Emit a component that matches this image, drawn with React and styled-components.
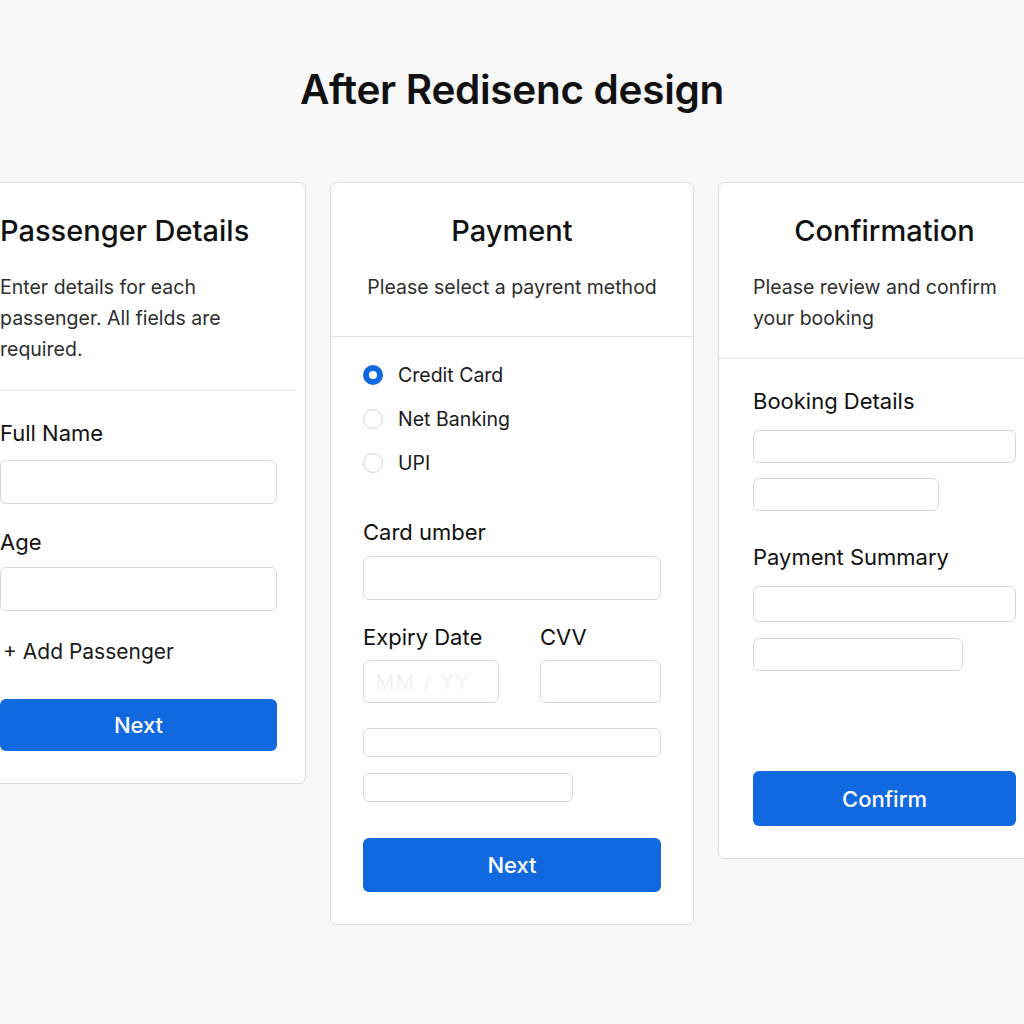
import styled, { createGlobalStyle } from 'styled-components';

const GlobalStyle = createGlobalStyle`
body {
    margin: 0;
    background: #f7f7f7;
    font-family: Inter, "Noto Sans", sans-serif;
    color: #111;
    overflow: hidden;
}
`;

const Page = styled.div`
width: 1024px;
height: 1024px;
padding-top: 66px;
box-sizing: border-box;
`;

const PageTitle = styled.h1`
margin: 0;
text-align: center;
font-size: 40.5px;
line-height: 48px;
font-weight: 600;
letter-spacing: -0.3px;
`;

const CardRow = styled.div`
display: flex;
align-items: flex-start;
gap: 24px;
margin-top: 68px;
margin-left: -33px;
`;

const Card = styled.div`
flex: none;
width: ${p => p.width}px;
background: #fff;
border: 1px solid #dcdcdc;
border-radius: 7px;
box-sizing: border-box;
padding-bottom: 32px;
`;

const CardHead = styled.div`
padding: 31px ${p => p.right || 32}px 0 ${p => p.left || 32}px;
`;

const CardTitle = styled.h2`
margin: 0;
font-size: 29px;
line-height: 34px;
font-weight: 500;
text-align: ${p => p.align || 'center'};
`;

const CardDesc = styled.p`
margin: 24px 0 0;
font-size: 19.5px;
line-height: 31px;
color: #2e2e2e;
text-align: ${p => p.align || 'left'};
`;

const Divider = styled.hr`
margin: ${p => p.gap}px ${p => p.inset || 0}px 0 0;
border: none;
border-top: 1px solid #e2e2e2;
`;

const CardBody = styled.div`
padding: ${p => p.top}px ${p => p.right || 32}px 0 ${p => p.left || 32}px;
display: flex;
flex-direction: column;
`;

const Label = styled.div`
font-size: 22px;
line-height: 28px;
color: #111;
margin-top: ${p => p.gap || 0}px;
`;

const Field = styled.input`
display: block;
box-sizing: border-box;
width: ${p => p.w ? p.w + 'px' : '100%'};
height: ${p => p.h || 44}px;
margin-top: ${p => p.gap || 0}px;
border: 1px solid #d9d9d9;
border-radius: 6px;
background: #fff;
padding: 0 12px;
font-family: Inter, sans-serif;
font-size: 20px;
font-weight: 300;
outline: none;
&::placeholder {
    color: #f0f0f0;
    letter-spacing: 2px;
}
`;

const AddLink = styled.div`
margin-top: 27px;
padding-left: 3px;
font-size: 21px;
line-height: 28px;
color: #1a1a1a;
`;

const PrimaryButton = styled.button`
display: block;
width: 100%;
height: ${p => p.h || 52}px;
margin-top: ${p => p.gap || 0}px;
border: none;
border-radius: 6px;
background: #1169e0;
color: #fff;
font-family: Inter, sans-serif;
font-size: 22px;
font-weight: 500;
cursor: pointer;
`;

const RadioList = styled.div`
display: flex;
flex-direction: column;
gap: 16px;
`;

const RadioRow = styled.label`
display: flex;
align-items: center;
gap: 15px;
height: 28px;
font-size: 19.5px;
color: #1a1a1a;
`;

const RadioDot = styled.span`
box-sizing: border-box;
width: 20px;
height: 20px;
border-radius: 50%;
border: ${p => p.checked ? '6px solid #1169e0' : '1px solid #d4d4d4'};
background: #fff;
`;

const Split = styled.div`
display: grid;
grid-template-columns: 136px 121px;
justify-content: space-between;
margin-top: 23px;
`;

function Radio({ label, checked }) {
    return (
        <RadioRow>
            <RadioDot checked={checked} />
            {label}
        </RadioRow>
    );
}

export default function App() {
    return (
        <Page>
            <GlobalStyle />
            <PageTitle>After Redisenc design</PageTitle>
            <CardRow>
                <Card width={339}>
                    <CardHead right={28}>
                        <CardTitle align="left">Passenger Details</CardTitle>
                        <CardDesc>Enter details for each passenger. All fields are required.</CardDesc>
                    </CardHead>
                    <Divider gap={25} inset={9} />
                    <CardBody top={28} right={28}>
                        <Label>Full Name</Label>
                        <Field gap={13} />
                        <Label gap={24}>Age</Label>
                        <Field gap={11} />
                        <AddLink>+ Add Passenger</AddLink>
                        <PrimaryButton gap={33}>Next</PrimaryButton>
                    </CardBody>
                </Card>

                <Card width={364}>
                    <CardHead>
                        <CardTitle>Payment</CardTitle>
                        <CardDesc align="center">Please select a payrent method</CardDesc>
                    </CardHead>
                    <Divider gap={33} />
                    <CardBody top={24}>
                        <RadioList>
                            <Radio label="Credit Card" checked />
                            <Radio label="Net Banking" />
                            <Radio label="UPI" />
                        </RadioList>
                        <Label gap={41}>Card umber</Label>
                        <Field gap={10} />
                        <Split>
                            <Label>Expiry Date</Label>
                            <Label>CVV</Label>
                            <Field gap={9} h={43} placeholder="MM / YY" />
                            <Field gap={9} h={43} />
                        </Split>
                        <Field gap={25} h={29} />
                        <Field gap={16} h={29} w={210} />
                        <PrimaryButton gap={36} h={54}>Next</PrimaryButton>
                    </CardBody>
                </Card>

                <Card width={331}>
                    <CardHead left={34}>
                        <CardTitle>Confirmation</CardTitle>
                        <CardDesc>Please review and confirm your booking</CardDesc>
                    </CardHead>
                    <Divider gap={24} />
                    <CardBody top={28} left={34}>
                        <Label>Booking Details</Label>
                        <Field gap={15} h={33} />
                        <Field gap={15} h={33} w={186} />
                        <Label gap={32}>Payment Summary</Label>
                        <Field gap={15} h={36} />
                        <Field gap={16} h={33} w={210} />
                        <PrimaryButton gap={100} h={55}>Confirm</PrimaryButton>
                    </CardBody>
                </Card>
            </CardRow>
        </Page>
    );
}
